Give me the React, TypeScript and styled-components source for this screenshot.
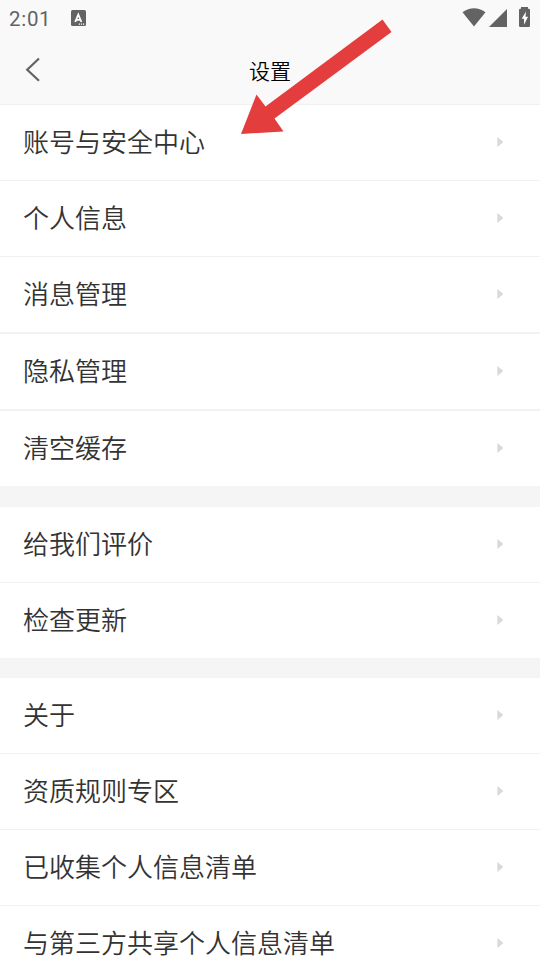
import React from "react";
import styled, { createGlobalStyle } from "styled-components";

const GlobalStyle = createGlobalStyle`
  * { box-sizing: border-box; }
  body { margin: 0; background: #f5f5f5; overflow: hidden; }
`;

const Screen = styled.div`
  position: relative;
  width: 540px;
  height: 960px;
  overflow: hidden;
  display: flex;
  flex-direction: column;
  background: #f5f5f5;
  font-family: "Noto Sans CJK SC", sans-serif;
`;

const Header = styled.header`
  flex: none;
  height: 105px;
  background: #f9f9f9;
  border-bottom: 1px solid #f1f1f1;
`;

const StatusBar = styled.div`
  height: 36px;
  padding: 0 9px;
  display: flex;
  align-items: center;
  color: #636363;
`;

const Clock = styled.span`
  width: 62px;
  font: 400 20.5px/36px Roboto, sans-serif;
  letter-spacing: 0.7px;
  padding-top: 2px;
`;

const StatusIcons = styled.div`
  margin-left: auto;
  display: flex;
`;

const TitleBar = styled.div`
  height: 68px;
  display: grid;
  grid-template-columns: 60px 1fr 60px;
  align-items: center;
`;

const BackButton = styled.button`
  width: 60px;
  height: 68px;
  padding: 0;
  border: 0;
  background: none;
  svg { display: block; }
`;

const Title = styled.h1`
  margin: 0;
  text-align: center;
  font-size: 21px;
  font-weight: 350;
  line-height: 30px;
  color: #000;
`;

const Group = styled.section`
  flex: none;
  background: #fff;
`;

const Gap = styled.div<{ $size: number }>`
  flex: none;
  height: ${(p) => p.$size}px;
  background: #f5f5f5;
`;

const Row = styled.div<{ $line: number }>`
  height: ${(p) => 75 + p.$line}px;
  padding: 0 36px 1px 23px;
  display: flex;
  align-items: center;
  justify-content: space-between;
  border-bottom: ${(p) => p.$line}px solid #f2f2f2;
`;

const Label = styled.span`
  padding-bottom: 2px;
  font-size: 26px;
  font-weight: 350;
  line-height: 38px;
  color: #333;
`;

const Caret = styled.svg`
  display: block;
  width: 7px;
  height: 10px;
  fill: #d9d9d9;
`;

const PointerArrow = styled.svg`
  position: absolute;
  left: 0;
  top: 0;
  pointer-events: none;
`;

interface Item { label: string; line: number }
const groups: { items: Item[]; gap: number }[] = [
  {
    items: [
      { label: "账号与安全中心", line: 1 },
      { label: "个人信息", line: 1 },
      { label: "消息管理", line: 2 },
      { label: "隐私管理", line: 2 },
      { label: "清空缓存", line: 0 },
    ],
    gap: 21,
  },
  { items: [{ label: "给我们评价", line: 1 }, { label: "检查更新", line: 0 }], gap: 20 },
  {
    items: [
      { label: "关于", line: 1 },
      { label: "资质规则专区", line: 1 },
      { label: "已收集个人信息清单", line: 1 },
      { label: "与第三方共享个人信息清单", line: 1 },
    ],
    gap: 0,
  },
];

export default function App() {
  return (
    <Screen>
      <GlobalStyle />
      <Header>
        <StatusBar>
          <Clock>2:01</Clock>
          <svg width="15" height="36" viewBox="0 0 15 36">
            <rect x="0" y="10" width="15" height="16" rx="1.5" fill="#636363" />
            <path d="M4.2 22 7.3 14.5 10.4 22M5.3 19.8h4" fill="none" stroke="#fff" strokeWidth="1.8" />
            <path d="M7.8 24.2h5.6" stroke="#fff" strokeWidth="1.3" strokeDasharray="1.2 .9" />
          </svg>
          <StatusIcons>
            <svg width="70" height="36" viewBox="461 0 70 36" fill="#636363">
              <path d="M462.5 12.2Q474 4.2 485.5 12.2L474 26.5Z" />
              <path d="M507 9V27H489Z" />
              <path d="M521 8.700V7h7v1.700h.800q1.200 0 1.200 1.200v15.900q0 1.200-1.200 1.200h-8.600q-1.200 0-1.200-1.200V9.900q0-1.200 1.200-1.200Z" />
              <path d="M526 11.500 521.700 18.800h2.300v6l4-8h-2.500Z" fill="#fff" />
            </svg>
          </StatusIcons>
        </StatusBar>
        <TitleBar>
          <BackButton aria-label="返回">
            <svg width="60" height="68" viewBox="0 36 60 68" fill="none" stroke="#636363" strokeWidth="2.2">
              <path d="M39 58.500 27.200 69.700 39 80.700" />
            </svg>
          </BackButton>
          <Title>设置</Title>
        </TitleBar>
      </Header>
      {groups.map((group, index) => (
        <React.Fragment key={index}>
          <Group>
            {group.items.map((item) => (
              <Row key={item.label} $line={item.line}>
                <Label>{item.label}</Label>
                <Caret viewBox="0 0 7 10">
                  <path d="M.4 0 6.400 5 .4 10Z" />
                </Caret>
              </Row>
            ))}
          </Group>
          {group.gap > 0 && <Gap $size={group.gap} />}
        </React.Fragment>
      ))}
      <PointerArrow width="540" height="150" viewBox="0 0 540 150">
        <path d="M382.500 19.500 391.500 32 274.500 118.500 283.500 131.500 241 134 256.500 94.500 265.500 106.500Z" fill="#e43d3d" />
      </PointerArrow>
    </Screen>
  );
}
